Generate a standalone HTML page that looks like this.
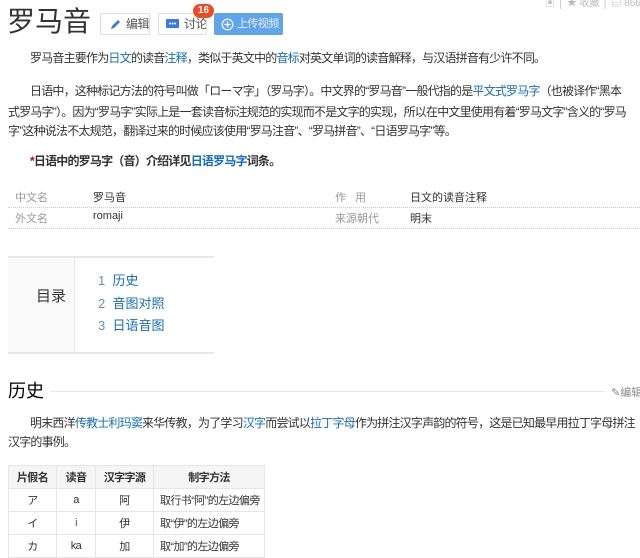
<!DOCTYPE html>
<html><head><meta charset="utf-8">
<style>
*{margin:0;padding:0;box-sizing:border-box}
body{width:640px;height:550px;overflow:hidden;background:#fff;font-family:"Liberation Sans","Noto Sans CJK SC",sans-serif;color:#333;position:relative;font-size:12px}
.a{position:absolute;white-space:nowrap}
a{color:#136ec2;text-decoration:none}
.btn{position:absolute;top:13px;height:22px;border:1px solid #ddd;border-radius:2px;background:#fff;font-size:12px;color:#555;line-height:20px;padding-left:25px;white-space:nowrap;letter-spacing:-0.5px;overflow:hidden}
p.a{font-size:12px;line-height:20px;letter-spacing:-0.8px}
.lab{color:#999}
.dot{position:absolute;left:8px;width:632px;border-top:1px dotted #ccc;height:0}
table{position:absolute;left:8px;top:465px;border-collapse:collapse;font-size:11px;table-layout:fixed;width:256px;letter-spacing:-0.6px}
td,th{border:1px solid #e6e6e6;text-align:center;height:23px;padding:0;white-space:nowrap;overflow:hidden}
th{background:#f5f5f5;font-weight:bold;color:#333}
</style></head><body>
<div class="a" style="left:7px;top:4px;font-size:28px;color:#333;line-height:36px">罗马音</div>
<div class="a" style="left:545px;top:-6px;font-size:10px;color:#bbb">▣ │ ★ 收藏 │ ▤ 8666 │ ▭</div>
<div class="btn" style="left:100px;width:50px"><svg style="position:absolute;left:9px;top:5px" width="11" height="11" viewBox="0 0 11 11"><path d="M1 10 L2 7 L8 1 L10 3 L4 9 Z" fill="#3a7be0"/></svg>编辑</div>
<div class="btn" style="left:158px;width:49px"><svg style="position:absolute;left:7px;top:5px" width="13" height="11" viewBox="0 0 13 11"><rect x="0" y="0" width="13" height="9" rx="1" fill="#3a7be0"/><circle cx="4" cy="4.5" r="1" fill="#fff"/><circle cx="6.5" cy="4.5" r="1" fill="#fff"/><circle cx="9" cy="4.5" r="1" fill="#fff"/></svg>讨论</div>
<div class="a" style="left:193px;top:4px;width:21px;height:14px;background:#f04a24;border-radius:7px;color:#fff;font-size:10px;font-weight:bold;text-align:center;line-height:14px">16</div>
<div class="btn" style="left:214px;width:69px;background:#62a4ec;border-color:#62a4ec;color:#e6f0ff;padding-left:22px;font-size:11px;letter-spacing:-0.6px"><svg style="position:absolute;left:6px;top:4px" width="13" height="13" viewBox="0 0 13 13"><circle cx="6.5" cy="6.5" r="5.3" stroke="#fff" stroke-width="1.2" fill="none"/><path d="M6.5 3.5v6M3.5 6.5h6" stroke="#fff" stroke-width="1.2"/></svg>上传视频</div>

<p class="a" style="left:30px;top:48px">罗马音主要作为<a>日文</a>的读音<a>注释</a>，类似于英文中的<a>音标</a>对英文单词的读音解释，与汉语拼音有少许不同。</p>
<p class="a" style="left:30px;top:81px">日语中，这种标记方法的符号叫做「ローマ字」（罗马字）。中文界的“罗马音”一般代指的是<a>平文式罗马字</a>（也被译作“黑本</p>
<p class="a" style="left:8px;top:102px">式罗马字”）。因为“罗马字”实际上是一套读音标注规范的实现而不是文字的实现，所以在中文里使用有着“罗马文字”含义的“罗马</p>
<p class="a" style="left:8px;top:121px">字”这种说法不太规范，翻译过来的时候应该使用“罗马注音”、“罗马拼音”、“日语罗马字”等。</p>
<p class="a" style="left:30px;top:151px;font-weight:bold;color:#333"><span style="color:#c00">*</span>日语中的罗马字（音）介绍详见<a>日语罗马字</a>词条。</p>

<div class="a lab" style="left:15px;top:189px;font-size:11px">中文名</div>
<div class="a" style="left:93px;top:189px;font-size:11px">罗马音</div>
<div class="a lab" style="left:335px;top:189px;font-size:11px">作&nbsp;&nbsp;&nbsp;用</div>
<div class="a" style="left:410px;top:189px;font-size:11px">日文的读音注释</div>
<div class="dot" style="top:207px"></div>
<div class="a lab" style="left:15px;top:210px;font-size:11px">外文名</div>
<div class="a" style="left:93px;top:210px;font-size:11px">romaji</div>
<div class="a lab" style="left:335px;top:210px;font-size:11px">来源朝代</div>
<div class="a" style="left:410px;top:210px;font-size:11px">明末</div>
<div class="dot" style="top:228px"></div>

<div class="a" style="left:8px;top:256px;width:206px;height:98px;border-top:2px solid #e8e8e8;border-bottom:2px solid #e8e8e8"></div>
<div class="a" style="left:8px;top:258px;width:67px;height:94px;background:#fafafa;border-right:1px solid #e8e8e8"></div>
<div class="a" style="left:36px;top:285px;font-size:15px;color:#333">目录</div>
<div class="a" style="left:98px;top:270px;font-size:13px;line-height:22.5px;color:#136ec2"><span style="color:#5b93d6">1</span>&nbsp;&nbsp;历史<br><span style="color:#5b93d6">2</span>&nbsp;&nbsp;音图对照<br><span style="color:#5b93d6">3</span>&nbsp;&nbsp;日语音图</div>

<div class="a" style="left:8px;top:379px;font-size:18px;color:#000;line-height:24px">历史</div>
<div class="a" style="left:50px;top:391px;width:555px;border-top:1px solid #e8e8e8"></div>
<div class="a" style="left:611px;top:384px;font-size:11px;color:#888">✎编辑</div>
<p class="a" style="left:30px;top:413px">明末西洋<a>传教士</a><a>利玛窦</a>来华传教，为了学习<a>汉字</a>而尝试以<a>拉丁字母</a>作为拼注汉字声韵的符号，这是已知最早用拉丁字母拼注</p>
<p class="a" style="left:8px;top:432px">汉字的事例。</p>

<table>
<colgroup><col style="width:48px"><col style="width:39px"><col style="width:58px"><col style="width:111px"></colgroup>
<tr><th>片假名</th><th>读音</th><th>汉字字源</th><th>制字方法</th></tr>
<tr><td>ア</td><td>a</td><td>阿</td><td style="text-align:left;padding-left:6px">取行书“阿”的左边偏旁</td></tr>
<tr><td>イ</td><td style="color:#136ec2">i</td><td>伊</td><td style="text-align:left;padding-left:6px">取“伊”的左边偏旁</td></tr>
<tr><td>カ</td><td>ka</td><td>加</td><td style="text-align:left;padding-left:6px">取“加”的左边偏旁</td></tr>
</table>
</body></html>
